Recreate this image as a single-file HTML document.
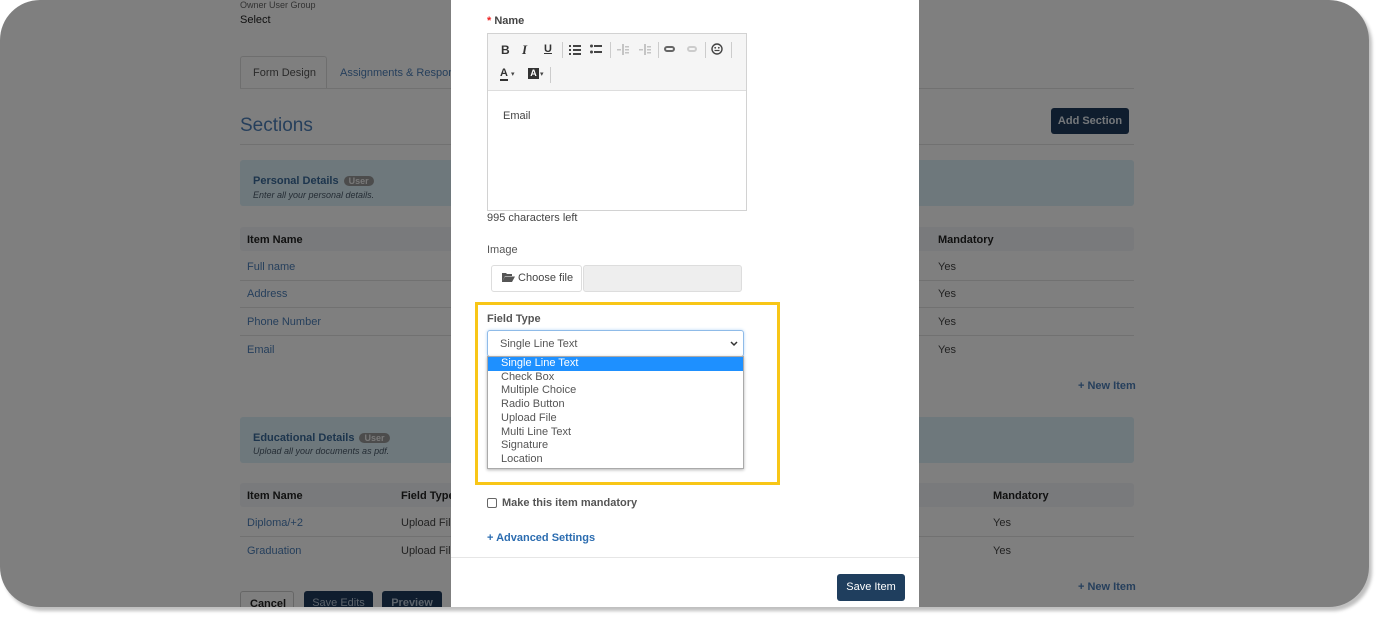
<!DOCTYPE html>
<html><head><meta charset="utf-8"><style>
*{box-sizing:border-box;margin:0;padding:0}
body{width:1377px;height:619px;background:#fff;position:relative;overflow:hidden;font-family:"Liberation Sans",sans-serif;font-size:11px;color:#2b2b2b}
.bg{position:absolute;left:0;top:0;width:1369px;height:607px;background:#fff;border-radius:40px;box-shadow:3px 4px 3px rgba(0,0,0,.25);overflow:hidden}
.a{position:absolute;white-space:nowrap}
.blue{color:#4c7fb8}
.panel{position:absolute;left:240px;width:894px;height:46px;background:#dcf0f8;border-radius:3px}
.th{position:absolute;left:240px;width:894px;height:24px;background:#f2f5f8;border-radius:3px}
.line{position:absolute;left:240px;width:894px;height:1px;background:#e2e2e2}
.badge{display:inline-block;background:#8a8a8a;color:#f0f0f0;border-radius:7px;font-size:9px;padding:0 5px;margin-left:5px;font-weight:bold}
.btn{position:absolute;background:#264a72;color:#d0d8e2;border-radius:3px;font-size:11px;text-align:center}
.ov{position:absolute;left:0;top:0;width:100%;height:100%;background:rgba(0,0,0,.5)}
.modal{position:absolute;left:451px;top:0;width:468px;height:607px;background:#fff}
.m{position:absolute;white-space:nowrap}
.sep{position:absolute;top:42px;width:1px;height:16px;background:#ccc}
</style></head><body>
<div class="bg">
<div class="a" style="left:240px;top:0;font-size:9px;color:#666">Owner User Group</div>
<div class="a" style="left:240px;top:14px;color:#222">Select</div>
<div class="a" style="left:240px;top:56px;width:87px;height:33px;border:1px solid #ddd;border-bottom:none;background:#fff;border-radius:3px 3px 0 0"></div>
<div class="a" style="left:253px;top:67px;color:#555">Form Design</div>
<div class="a blue" style="left:340px;top:67px">Assignments &amp; Respons</div>
<div class="line" style="top:88px"></div>
<div class="a" style="left:240px;top:115px;font-size:19px;color:#4c7fb8">Sections</div>
<div class="btn" style="left:1051px;top:108px;width:78px;height:26px;line-height:26px;font-weight:bold;background:#1e3a5c;color:#e8eef5">Add Section</div>
<div class="line" style="top:144px"></div>
<div class="panel" style="top:160px"></div>
<div class="a" style="left:253px;top:175px;font-weight:bold;color:#3a6a9a">Personal Details<span class="badge" style="background:#999">User</span></div>
<div class="a" style="left:253px;top:190px;font-size:9px;font-style:italic;color:#4a5a6a">Enter all your personal details.</div>
<div class="th" style="top:227px"></div>
<div class="a" style="left:247px;top:234px;font-weight:bold;color:#222">Item Name</div>
<div class="a" style="left:938px;top:234px;font-weight:bold;color:#222">Mandatory</div>
<div class="a blue" style="left:247px;top:261px">Full name</div><div class="a" style="left:938px;top:261px;color:#444">Yes</div>
<div class="line" style="top:280px"></div>
<div class="a blue" style="left:247px;top:288px">Address</div><div class="a" style="left:938px;top:288px;color:#444">Yes</div>
<div class="line" style="top:307px"></div>
<div class="a blue" style="left:247px;top:316px">Phone Number</div><div class="a" style="left:938px;top:316px;color:#444">Yes</div>
<div class="line" style="top:335px"></div>
<div class="a blue" style="left:247px;top:344px">Email</div><div class="a" style="left:938px;top:344px;color:#444">Yes</div>
<div class="a blue" style="left:1078px;top:380px;font-weight:bold">+ New Item</div>
<div class="panel" style="top:417px"></div>
<div class="a" style="left:253px;top:432px;font-weight:bold;color:#3a6a9a">Educational Details<span class="badge" style="background:#999">User</span></div>
<div class="a" style="left:253px;top:446px;font-size:9px;font-style:italic;color:#4a5a6a">Upload all your documents as pdf.</div>
<div class="th" style="top:483px"></div>
<div class="a" style="left:247px;top:490px;font-weight:bold;color:#222">Item Name</div>
<div class="a" style="left:401px;top:490px;font-weight:bold;color:#222">Field Type</div>
<div class="a" style="left:993px;top:490px;font-weight:bold;color:#222">Mandatory</div>
<div class="a blue" style="left:247px;top:517px">Diploma/+2</div><div class="a" style="left:401px;top:517px;color:#444">Upload File</div><div class="a" style="left:993px;top:517px;color:#444">Yes</div>
<div class="line" style="top:536px"></div>
<div class="a blue" style="left:247px;top:545px">Graduation</div><div class="a" style="left:401px;top:545px;color:#444">Upload File</div><div class="a" style="left:993px;top:545px;color:#444">Yes</div>
<div class="a blue" style="left:1078px;top:581px;font-weight:bold">+ New Item</div>
<div class="a" style="left:240px;top:591px;width:54px;height:26px;border:1px solid #ccc;border-radius:3px;padding:6px 9px;color:#222;font-weight:bold;background:#fff">Cancel</div>
<div class="btn" style="left:304px;top:591px;width:69px;height:26px;padding-top:6px;background:#1e3a5c;color:#b8c6d6">Save Edits</div>
<div class="btn" style="left:382px;top:591px;width:60px;height:26px;padding-top:6px;font-weight:bold;background:#1e3a5c;color:#b8c6d6">Preview</div>

<div class="ov"></div>

<div class="modal">
<div class="m" style="left:36px;top:15px;font-weight:bold;color:#444"><span style="color:#e22">*</span> Name</div>
<div class="m" style="left:36px;top:33px;width:260px;height:178px;border:1px solid #d2d2d2"></div>
<div class="m" style="left:37px;top:34px;width:258px;height:57px;background:#f5f5f5;border-bottom:1px solid #ddd"></div>
<div class="m" style="left:50px;top:43px;font-weight:bold;font-size:12px;color:#333">B</div>
<div class="m" style="left:71px;top:42px;font-weight:bold;font-style:italic;font-family:'Liberation Serif',serif;font-size:13px;color:#333">I</div>
<div class="m" style="left:93px;top:43px;font-weight:bold;text-decoration:underline;color:#333">U</div>
<div class="sep" style="left:111px"></div>
<svg class="m" style="left:118px;top:44px" width="12" height="11" viewBox="0 0 12 11"><g fill="#444"><rect x="4" y="1" width="8" height="2"/><rect x="4" y="5" width="8" height="2"/><rect x="4" y="9" width="8" height="2"/><rect x="0" y="1" width="2" height="2"/><rect x="0" y="5" width="2" height="2"/><rect x="0" y="9" width="2" height="2"/></g></svg>
<svg class="m" style="left:139px;top:44px" width="12" height="10" viewBox="0 0 12 10"><g fill="#444"><circle cx="1.5" cy="2" r="1.5"/><circle cx="1.5" cy="8" r="1.5"/><rect x="4" y="1" width="8" height="2"/><rect x="4" y="7" width="8" height="2"/></g></svg>
<div class="sep" style="left:159px"></div>
<svg class="m" style="left:166px;top:44px" width="12" height="11" viewBox="0 0 12 11"><g fill="#c4c4c4"><rect x="5" y="0" width="2" height="11"/><rect x="8" y="2" width="4" height="1.5"/><rect x="8" y="5" width="4" height="1.5"/><rect x="8" y="8" width="4" height="1.5"/><rect x="0" y="5" width="4" height="1.5"/></g></svg>
<svg class="m" style="left:188px;top:44px" width="12" height="11" viewBox="0 0 12 11"><g fill="#c4c4c4"><rect x="5" y="0" width="2" height="11"/><rect x="8" y="2" width="4" height="1.5"/><rect x="8" y="5" width="4" height="1.5"/><rect x="8" y="8" width="4" height="1.5"/><rect x="0" y="5" width="4" height="1.5"/></g></svg>
<div class="sep" style="left:207px"></div>
<div class="m" style="left:213px;top:46px;width:11px;height:6px;border:2px solid #666;border-radius:3px"></div>
<div class="m" style="left:236px;top:46px;width:10px;height:6px;border:2px solid #ccc;border-radius:3px"></div>
<div class="sep" style="left:254px"></div>
<svg class="m" style="left:260px;top:43px" width="12" height="12" viewBox="0 0 12 12"><circle cx="6" cy="6" r="5" fill="none" stroke="#444" stroke-width="1.4"/><circle cx="4.2" cy="4.8" r=".9" fill="#444"/><circle cx="7.8" cy="4.8" r=".9" fill="#444"/><path d="M3.5 7.5h5" stroke="#444" stroke-width="1.2"/></svg>
<div class="sep" style="left:280px"></div>
<div class="m" style="left:49px;top:68px;font-weight:bold;color:#333;border-bottom:2px solid #333;line-height:11px">A</div><div class="m" style="left:60px;top:70px;font-size:7px;color:#444">▾</div>
<div class="m" style="left:77px;top:68px;width:11px;height:11px;background:#333;color:#fff;font-size:9px;font-weight:bold;text-align:center;line-height:11px">A</div><div class="m" style="left:89px;top:70px;font-size:7px;color:#444">▾</div>
<div class="sep" style="left:99px;top:67px"></div>
<div class="m" style="left:52px;top:110px;color:#444">Email</div>
<div class="m" style="left:36px;top:212px;color:#444">995 characters left</div>
<div class="m" style="left:36px;top:244px;color:#555">Image</div>
<div class="m" style="left:40px;top:265px;width:91px;height:27px;border:1px solid #ddd;border-radius:3px;background:#fff;padding:6px 0 0 10px;color:#444"><svg width="13" height="10" viewBox="0 0 13 10" style="vertical-align:-1px"><path d="M0 1h4l1 1h5v2H3L0 10z M3 4.5h10L10 10H0z" fill="#555"/></svg> Choose file</div>
<div class="m" style="left:132px;top:265px;width:159px;height:27px;border:1px solid #ddd;border-radius:3px;background:#eee"></div>
<div class="m" style="left:24px;top:302px;width:305px;height:183px;border:3px solid #f8c617"></div>
<div class="m" style="left:36px;top:313px;font-weight:bold;color:#555">Field Type</div>
<div class="m" style="left:36px;top:330px;width:257px;height:27px;border:1px solid #8fbbe8;border-radius:3px;box-shadow:0 0 3px #b8d6f5;padding:7px 0 0 12px;color:#555">Single Line Text<svg style="position:absolute;right:5px;top:10px" width="8" height="6" viewBox="0 0 8 6"><path d="M1 1l3 3 3-3" fill="none" stroke="#333" stroke-width="1.5"/></svg></div>
<div class="m" style="left:36px;top:356px;width:257px;height:113px;border:1px solid #aaa;background:#fff;box-shadow:0 1px 3px rgba(0,0,0,.3);line-height:13.7px;color:#555">
<div style="background:#1e90ff;color:#fff;padding-left:13px">Single Line Text</div>
<div style="padding-left:13px">Check Box</div><div style="padding-left:13px">Multiple Choice</div><div style="padding-left:13px">Radio Button</div><div style="padding-left:13px">Upload File</div><div style="padding-left:13px">Multi Line Text</div><div style="padding-left:13px">Signature</div><div style="padding-left:13px">Location</div></div>
<div class="m" style="left:36px;top:498px;width:10px;height:10px;border:1px solid #666;border-radius:2px"></div>
<div class="m" style="left:51px;top:497px;font-weight:bold;color:#555">Make this item mandatory</div>
<div class="m" style="left:36px;top:532px;font-weight:bold;color:#2b6cb0">+ Advanced Settings</div>
<div class="m" style="left:0;top:557px;width:468px;height:1px;background:#e6e6e6"></div>
<div class="m" style="left:386px;top:574px;width:68px;height:27px;background:#1f3e5e;border-radius:3px;color:#fff;text-align:center;line-height:27px">Save Item</div>
</div>
</div>
</body></html>
